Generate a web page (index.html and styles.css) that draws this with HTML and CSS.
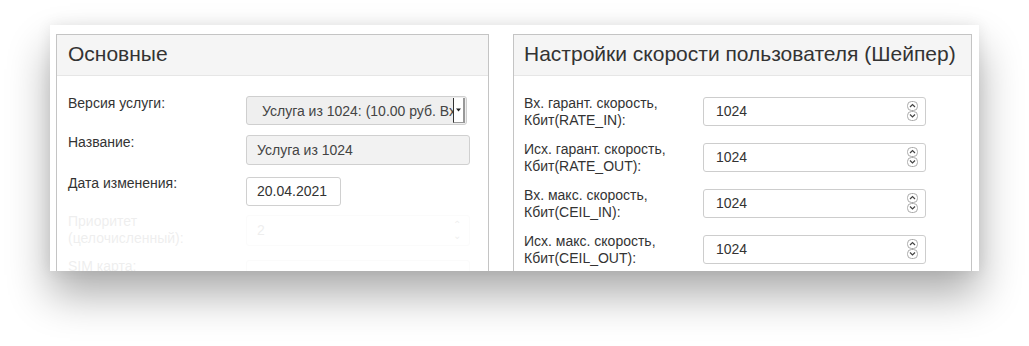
FILE: index.html
```html
<!DOCTYPE html>
<html lang="ru">
<head>
<meta charset="utf-8">
<link rel="stylesheet" href="styles.css">
</head>
<body>
<div class="card">
  <section class="panel panel-left">
    <div class="panel-head">Основные</div>
    <div class="panel-body">
      <div class="row r-select">
        <div class="label">Версия услуги:</div>
        <div class="select">
          <span class="select-text">Услуга из 1024: (10.00 руб. Вх</span>
          <span class="select-btn"><svg width="5" height="4" viewBox="0 0 5 4"><path d="M0 0.5h5L2.5 3.5z" fill="#222"/></svg></span>
        </div>
      </div>
      <div class="row r-name">
        <div class="label">Название:</div>
        <div class="input disabled wide">Услуга из 1024</div>
      </div>
      <div class="row r-date">
        <div class="label">Дата изменения:</div>
        <div class="input date">20.04.2021</div>
      </div>
      <div class="row r-prio faded">
        <div class="label">Приоритет<br>(целочисленный):</div>
        <div class="input wide prio">2<span class="spin-faint">⌃<br>⌄</span></div>
      </div>
      <div class="row r-sim faded">
        <div class="label">SIM карта:</div>
        <div class="input wide"></div>
      </div>
    </div>
  </section>
  <section class="panel panel-right">
    <div class="panel-head">Настройки скорости пользователя (Шейпер)</div>
    <div class="panel-body">
      <div class="row speed">
        <div class="label">Вх. гарант. скорость,<br>Кбит(RATE_IN):</div>
        <div class="input num">1024<span class="spin"><svg width="11" height="20" viewBox="0 0 11 20"><rect x="0.5" y="0.5" width="10" height="9" rx="4" fill="#fff" stroke="#aaa"/><rect x="0.5" y="10.5" width="10" height="9" rx="4" fill="#fff" stroke="#aaa"/><path d="M3 6l2.5-2.5L8 6" fill="none" stroke="#444" stroke-width="1.2"/><path d="M3 13.5l2.5 2.5L8 13.5" fill="none" stroke="#444" stroke-width="1.2"/></svg></span></div>
      </div>
      <div class="row speed">
        <div class="label">Исх. гарант. скорость,<br>Кбит(RATE_OUT):</div>
        <div class="input num">1024<span class="spin"><svg width="11" height="20" viewBox="0 0 11 20"><rect x="0.5" y="0.5" width="10" height="9" rx="4" fill="#fff" stroke="#aaa"/><rect x="0.5" y="10.5" width="10" height="9" rx="4" fill="#fff" stroke="#aaa"/><path d="M3 6l2.5-2.5L8 6" fill="none" stroke="#444" stroke-width="1.2"/><path d="M3 13.5l2.5 2.5L8 13.5" fill="none" stroke="#444" stroke-width="1.2"/></svg></span></div>
      </div>
      <div class="row speed">
        <div class="label">Вх. макс. скорость,<br>Кбит(CEIL_IN):</div>
        <div class="input num">1024<span class="spin"><svg width="11" height="20" viewBox="0 0 11 20"><rect x="0.5" y="0.5" width="10" height="9" rx="4" fill="#fff" stroke="#aaa"/><rect x="0.5" y="10.5" width="10" height="9" rx="4" fill="#fff" stroke="#aaa"/><path d="M3 6l2.5-2.5L8 6" fill="none" stroke="#444" stroke-width="1.2"/><path d="M3 13.5l2.5 2.5L8 13.5" fill="none" stroke="#444" stroke-width="1.2"/></svg></span></div>
      </div>
      <div class="row speed">
        <div class="label">Исх. макс. скорость,<br>Кбит(CEIL_OUT):</div>
        <div class="input num">1024<span class="spin"><svg width="11" height="20" viewBox="0 0 11 20"><rect x="0.5" y="0.5" width="10" height="9" rx="4" fill="#fff" stroke="#aaa"/><rect x="0.5" y="10.5" width="10" height="9" rx="4" fill="#fff" stroke="#aaa"/><path d="M3 6l2.5-2.5L8 6" fill="none" stroke="#444" stroke-width="1.2"/><path d="M3 13.5l2.5 2.5L8 13.5" fill="none" stroke="#444" stroke-width="1.2"/></svg></span></div>
      </div>
    </div>
  </section>
</div>
</body>
</html>
```

FILE: styles.css
```css
* { box-sizing: border-box; }
html, body { margin: 0; padding: 0; background: #fff; }
body {
  width: 1029px;
  height: 346px;
  overflow: hidden;
  font-family: "Liberation Sans", Arial, sans-serif;
  font-size: 14px;
  color: #333;
}
.card {
  margin: 25px 0 0 50px;
  width: 929px;
  height: 246px;
  overflow: hidden;
  background: #fff;
  display: flex;
  gap: 24px;
  padding: 9px 7px 0 6px;
  box-shadow: 0 24px 40px rgba(0,0,0,0.32), 0 0 14px rgba(0,0,0,0.08);
}
.panel {
  border: 1px solid #c4c4c4;
  border-bottom: none;
  height: 400px;
  flex: none;
}
.panel-left { width: 433px; }
.panel-right { width: 459px; }
.panel-head {
  height: 41px;
  background: #f5f5f5;
  border-bottom: 1px solid #e6e6e6;
  font-size: 21px;
  line-height: 37px;
  padding-left: 11px;
  color: #333;
  white-space: nowrap;
}
.panel-right .panel-head { padding-left: 10px; }
.panel-body {
  padding: 21px 0 0 11px;
}
.panel-right .panel-body { padding-left: 10px; }
.row {
  display: flex;
  align-items: flex-start;
}
.label {
  width: 178px;
  flex: none;
  line-height: 17px;
  white-space: nowrap;
}
.panel-left .label { margin-top: -2px; }
.r-select { height: 39px; }
.r-name { height: 41px; }
.r-date { height: 38px; }
.r-prio { height: 45px; }
.select {
  width: 221px;
  height: 29px;
  border: 1px solid #cfcfcf;
  border-radius: 3px;
  background: #efefef;
  display: flex;
  align-items: center;
  padding-left: 15px;
  overflow: hidden;
  color: #444;
  margin-top: -1px;
}
.select-text { white-space: nowrap; flex: 1; overflow: hidden; }
.select-btn {
  width: 12px;
  height: 25px;
  flex: none;
  background: #fff;
  border-left: 1px solid #333;
  border-right: 2px solid #999;
  border-bottom: 1px solid #999;
  display: flex;
  align-items: center;
  justify-content: center;
  margin-right: 1px;
}
.input {
  height: 30px;
  border: 1px solid #d0d0d0;
  border-radius: 3px;
  background: #fff;
  padding-left: 10px;
  line-height: 28px;
  color: #333;
  position: relative;
}
.input.wide { width: 224px; }
.input.disabled { background: #f2f2f2; color: #444; margin-top: -1px; }
.input.date { width: 95px; height: 29px; line-height: 27px; }
.faded { opacity: 0.08; }
.prio { height: 31px; }
.spin-faint {
  position: absolute;
  right: 8px;
  top: 3px;
  font-size: 10px;
  line-height: 11px;
}
.speed { height: 46px; }
.speed .label { width: 179px; margin-top: -2px; }
.input.num {
  width: 223px;
  height: 29px;
  padding-left: 12px;
  line-height: 26px;
  border-color: #cdcdcd;
}
.spin {
  position: absolute;
  right: 7px;
  top: 3px;
  width: 11px;
  height: 20px;
  display: block;
}
.spin svg { display: block; }
```
